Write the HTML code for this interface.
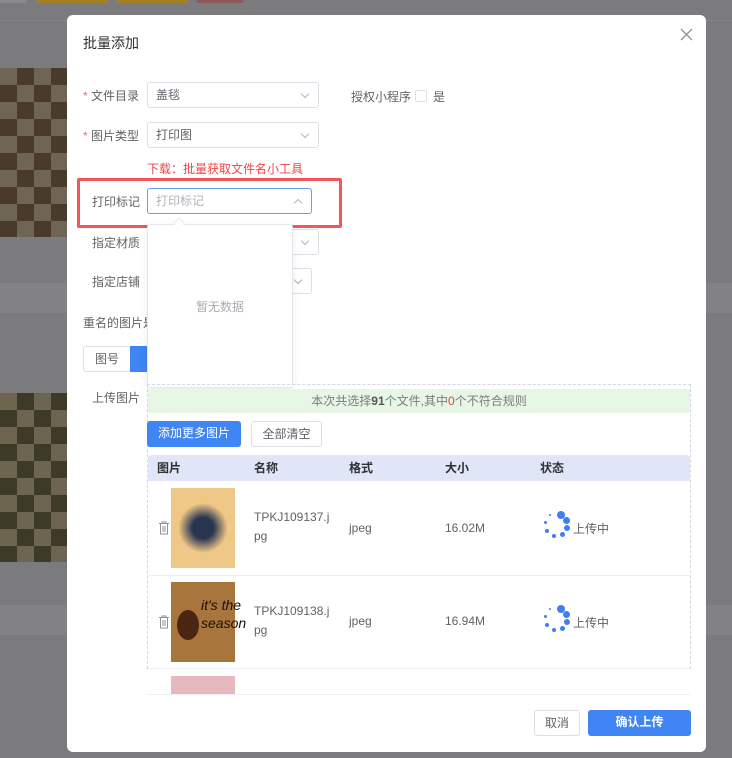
<!DOCTYPE html>
<html><head><meta charset="utf-8"><style>
*{box-sizing:border-box;margin:0;padding:0}
body{width:732px;height:758px;overflow:hidden;background:#7b7b7e;font-family:"Liberation Sans","Noto Sans CJK SC",sans-serif;font-size:12px;color:#606266;position:relative}
.abs{position:absolute}
.sel{position:absolute;height:26px;border:1px solid #dcdfe6;border-radius:3px;background:#fff;padding-left:8px;line-height:24px;color:#606266}
.sel .ar{position:absolute;right:10px;top:8px;width:6px;height:6px;border-right:1px solid #b0b3b8;border-bottom:1px solid #b0b3b8;transform:rotate(45deg)}
.lbl{position:absolute;color:#606266;font-size:12px}
.lbl i{color:#f56c6c;font-style:normal}
.btn{position:absolute;height:26px;border-radius:3px;text-align:center;line-height:24px;font-size:12px}
.dot{position:absolute;border-radius:50%;background:#3f7ff0}
</style></head><body>
<div class="abs" style="left:0;top:0;width:26px;height:3px;background:#8a8a8a"></div>
<div class="abs" style="left:37px;top:0;width:70px;height:3px;background:#a08020"></div>
<div class="abs" style="left:117px;top:0;width:70px;height:3px;background:#a08020"></div>
<div class="abs" style="left:197px;top:0;width:46px;height:3px;background:#8a5a5a"></div>
<div class="abs" style="left:0;top:20px;width:732px;height:1px;background:#858588"></div>
<div class="abs" style="left:0;top:68px;width:67px;height:169px;background:repeating-conic-gradient(#4a3a2a 0 25%,#6e6652 0 50%) 0 0/34px 34px"></div>
<div class="abs" style="left:0;top:393px;width:67px;height:169px;background:repeating-conic-gradient(#3e3a28 0 25%,#6e6550 0 50%) 0 0/34px 34px"></div>
<div class="abs" style="left:0;top:283px;width:732px;height:30px;background:#828285"></div>
<div class="abs" style="left:0;top:605px;width:732px;height:30px;background:#828285"></div>

<div class="abs" style="left:67px;top:15px;width:639px;height:737px;background:#fff;border-radius:6px"></div>
<div class="abs" style="left:83px;top:33px;font-size:14px;color:#303133">批量添加</div>
<svg class="abs" style="left:680px;top:28px" width="13" height="13"><path d="M1 1L12 12M12 1L1 12" stroke="#909399" stroke-width="1.3"/></svg>

<div class="lbl" style="left:83px;top:87px"><i>*</i> 文件目录</div>
<div class="sel" style="left:147px;top:82px;width:172px">盖毯<span class="ar"></span></div>
<div class="lbl" style="left:351px;top:88px">授权小程序</div>
<div class="abs" style="left:415px;top:90px;width:12px;height:12px;border:1px solid #dcdfe6;border-radius:2px"></div>
<div class="lbl" style="left:433px;top:88px">是</div>

<div class="lbl" style="left:83px;top:127px"><i>*</i> 图片类型</div>
<div class="sel" style="left:147px;top:122px;width:172px">打印图<span class="ar"></span></div>
<div class="abs" style="left:147px;top:160px;color:#f04545;font-size:12px">下载：批量获取文件名小工具</div>

<div class="lbl" style="left:92px;top:234px">指定材质</div>
<div class="sel" style="left:147px;top:229px;width:172px"><span class="ar"></span></div>
<div class="lbl" style="left:92px;top:273px">指定店铺</div>
<div class="sel" style="left:147px;top:268px;width:165px"><span class="ar"></span></div>
<div class="abs" style="left:83px;top:314px;color:#606266">重名的图片是</div>
<div class="btn" style="left:83px;top:346px;width:48px;border:1px solid #dcdfe6;color:#606266">图号</div>
<div class="btn" style="left:130px;top:346px;width:40px;background:#3f85f4;border-radius:0 3px 3px 0"></div>

<div class="abs" style="left:77px;top:178px;width:265px;height:50px;border:3px solid #f25656;border-radius:2px"></div>
<div class="lbl" style="left:92px;top:193px">打印标记</div>
<div class="sel" style="left:147px;top:188px;width:165px;border-color:#6a9cf5;color:#b0b3b8">打印标记<span class="ar" style="transform:rotate(225deg);top:11px"></span></div>
<div class="abs" style="left:147px;top:224px;width:146px;height:164px;background:#fff;border:1px solid #e4e7ed;border-radius:3px;box-shadow:0 2px 8px rgba(0,0,0,.08)"></div>
<div class="abs" style="left:175px;top:219px;width:8px;height:8px;background:#fff;border-left:1px solid #e4e7ed;border-top:1px solid #e4e7ed;transform:rotate(45deg)"></div>
<div class="abs" style="left:147px;top:298px;width:146px;text-align:center;color:#a8abb2">暂无数据</div>

<div class="lbl" style="left:92px;top:389px">上传图片</div>
<div class="abs" style="left:147px;top:384px;width:544px;height:285px;border:1px dashed #d4d7de;border-bottom:none"></div>
<div class="abs" style="left:148px;top:389px;width:542px;height:24px;background:#e7f6e5;text-align:center;line-height:24px;color:#7a7d82">本次共选择<b style="color:#555">91</b>个文件,其中<span style="color:#f04040">0</span>个不符合规则</div>
<div class="btn" style="left:147px;top:421px;width:94px;background:#3f85f4;color:#fff">添加更多图片</div>
<div class="btn" style="left:251px;top:421px;width:71px;border:1px solid #dcdfe6;color:#606266">全部清空</div>
<div class="abs" style="left:148px;top:455px;width:542px;height:26px;background:#e0e6f7;border-radius:4px 4px 0 0;color:#303133;font-weight:bold;line-height:26px">
<span class="abs" style="left:9px">图片</span><span class="abs" style="left:106px">名称</span><span class="abs" style="left:201px">格式</span><span class="abs" style="left:297px">大小</span><span class="abs" style="left:392px">状态</span></div>

<div class="abs" style="left:148px;top:575px;width:542px;height:1px;background:#ebeef5"></div>
<div class="abs" style="left:148px;top:668px;width:542px;height:1px;background:#ebeef5"></div>
<div class="abs" style="left:148px;top:694px;width:542px;height:1px;background:#ebeef5"></div>

<svg class="abs" style="left:158px;top:521px" width="12" height="14"><path d="M1 2.5H11M4 2.5V1H8V2.5M2.5 2.5V13H9.5V2.5M5 5V11M7 5V11" fill="none" stroke="#909399"/></svg>
<svg class="abs" style="left:158px;top:615px" width="12" height="14"><path d="M1 2.5H11M4 2.5V1H8V2.5M2.5 2.5V13H9.5V2.5M5 5V11M7 5V11" fill="none" stroke="#909399"/></svg>
<div class="abs" style="left:171px;top:488px;width:64px;height:80px;background:#efc786"><div class="abs" style="left:8px;top:14px;width:48px;height:52px;background:radial-gradient(circle,#2a3550 30%,transparent 70%)"></div></div>
<div class="abs" style="left:171px;top:582px;width:64px;height:80px;background:#a8753d"><div class="abs" style="left:6px;top:28px;width:22px;height:30px;border-radius:50%;background:#4a2512"></div><div class="abs" style="left:30px;top:14px;font-size:14px;color:#1a1008;font-style:italic;line-height:18px">it's the<br>season</div></div>
<div class="abs" style="left:171px;top:676px;width:64px;height:18px;background:#e8b8c0"></div>

<div class="abs" style="left:254px;top:508px;line-height:19px">TPKJ109137.j<br>pg</div>
<div class="abs" style="left:349px;top:521px">jpeg</div>
<div class="abs" style="left:445px;top:521px">16.02M</div>
<div class="abs" style="left:254px;top:602px;line-height:19px">TPKJ109138.j<br>pg</div>
<div class="abs" style="left:349px;top:614px">jpeg</div>
<div class="abs" style="left:445px;top:614px">16.94M</div>

<div class="abs" style="left:542px;top:511px;width:32px;height:32px">
<div class="dot" style="left:15px;top:0;width:8px;height:8px"></div><div class="dot" style="left:21px;top:6px;width:7px;height:7px"></div><div class="dot" style="left:22px;top:14px;width:6px;height:6px"></div><div class="dot" style="left:18px;top:21px;width:5px;height:5px"></div><div class="dot" style="left:10px;top:23px;width:4px;height:4px"></div><div class="dot" style="left:3px;top:18px;width:4px;height:4px"></div><div class="dot" style="left:2px;top:10px;width:3px;height:3px"></div><div class="dot" style="left:7px;top:3px;width:2px;height:2px"></div></div>
<div class="abs" style="left:573px;top:520px">上传中</div>
<div class="abs" style="left:542px;top:605px;width:32px;height:32px">
<div class="dot" style="left:15px;top:0;width:8px;height:8px"></div><div class="dot" style="left:21px;top:6px;width:7px;height:7px"></div><div class="dot" style="left:22px;top:14px;width:6px;height:6px"></div><div class="dot" style="left:18px;top:21px;width:5px;height:5px"></div><div class="dot" style="left:10px;top:23px;width:4px;height:4px"></div><div class="dot" style="left:3px;top:18px;width:4px;height:4px"></div><div class="dot" style="left:2px;top:10px;width:3px;height:3px"></div><div class="dot" style="left:7px;top:3px;width:2px;height:2px"></div></div>
<div class="abs" style="left:573px;top:614px">上传中</div>

<div class="btn" style="left:534px;top:710px;width:46px;border:1px solid #dcdfe6;color:#606266">取消</div>
<div class="btn" style="left:588px;top:710px;width:103px;background:#3f85f4;color:#fff;font-weight:bold">确认上传</div>
</body></html>
